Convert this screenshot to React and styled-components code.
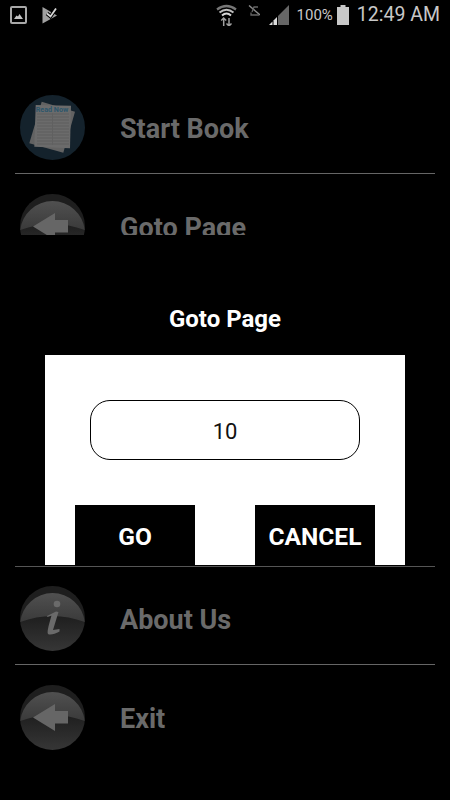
import React from 'react';
import styled, { createGlobalStyle } from 'styled-components';

const GlobalStyle = createGlobalStyle`
  html, body {
    margin: 0;
    padding: 0;
    background: #000;
    font-family: Roboto, "Liberation Sans", sans-serif;
  }
  * {
    box-sizing: border-box;
  }
`;

const Screen = styled.div`
  width: 450px;
  height: 800px;
  background: #000;
  display: flex;
  flex-direction: column;
  overflow: hidden;
`;

const StatusBar = styled.div`
  height: 30px;
  display: flex;
  align-items: center;
  padding: 0 10px;
  color: #c8c8c8;
  flex-shrink: 0;
`;

const StatusLeft = styled.div`
  display: flex;
  align-items: center;
  gap: 15px;
  flex: 1;
`;

const StatusRight = styled.div`
  display: flex;
  align-items: center;
`;

const StatusText = styled.span`
  font-size: ${(p) => p.$size}px;
  line-height: 30px;
  margin-left: ${(p) => p.$left}px;
  white-space: nowrap;
`;

const TopMenu = styled.div`
  height: 205px;
  padding-top: 46px;
  overflow: hidden;
  flex-shrink: 0;
`;

const Row = styled.div`
  height: 98px;
  margin: 0 15px;
  padding: 6px 0 0 5px;
  display: flex;
  align-items: center;
  gap: 35px;
  border-bottom: ${(p) => (p.$last ? 'none' : '1px solid #666')};
`;

const RowLabel = styled.span`
  font-size: 27px;
  font-weight: 700;
  color: #6a6a6a;
  padding-top: 3px;
`;

const DialogArea = styled.div`
  height: 330px;
  flex-shrink: 0;
  display: flex;
  flex-direction: column;
  align-items: center;
`;

const DialogTitle = styled.h2`
  margin: 0;
  height: 120px;
  padding-top: 69px;
  font-size: 24px;
  line-height: 30px;
  font-weight: 700;
  color: #fff;
`;

const DialogBody = styled.div`
  width: 360px;
  height: 210px;
  background: #fff;
  padding: 45px 30px 0;
  display: flex;
  flex-direction: column;
  align-items: center;
`;

const PageInput = styled.input`
  width: 270px;
  height: 60px;
  border: 1px solid #000;
  border-radius: 20px;
  background: #fff;
  color: #111;
  text-align: center;
  font-family: inherit;
  font-size: 22px;
  padding: 2px 0 0;
  outline: none;
`;

const ButtonRow = styled.div`
  width: 100%;
  margin-top: 45px;
  display: flex;
  justify-content: space-between;
`;

const DialogButton = styled.button`
  width: 120px;
  height: 60px;
  border: none;
  background: #000;
  color: #fff;
  font-family: inherit;
  font-size: 24.5px;
  font-weight: 700;
  padding: 2px 0 0;
`;

const BottomMenu = styled.div`
  flex-shrink: 0;
  margin: 1px 15px 0;
  border-top: 1px solid #555;
  & > div {
    margin: 0;
  }
`;

const WifiSlot = styled.span`
  display: flex;
  margin-right: 11px;
`;

const NoSimSlot = styled.span`
  display: flex;
  margin: 0 9px 10px 0;
`;

const BatterySlot = styled.span`
  display: flex;
  margin-left: 4px;
`;

function GlossDisc({ id, children }) {
  return (
    <svg width="65" height="65" viewBox="0 0 65 65">
      <defs>
        <linearGradient id={`${id}-top`} x1="0" y1="0" x2="0" y2="1">
          <stop offset="0" stopColor="#505050" />
          <stop offset="1" stopColor="#3a3a3a" />
        </linearGradient>
        <linearGradient id={`${id}-bottom`} x1="0" y1="0" x2="0" y2="1">
          <stop offset="0.45" stopColor="#1e1e1e" />
          <stop offset="1" stopColor="#363636" />
        </linearGradient>
      </defs>
      <circle cx="32.5" cy="32.5" r="32.5" fill={`url(#${id}-bottom)`} />
      <path d="M0.2 36 A32.5 32.5 0 0 1 64.8 36 Q32.5 24 0.2 36 Z" fill={`url(#${id}-top)`} />
      {children}
    </svg>
  );
}

function BackIcon({ id }) {
  return (
    <GlossDisc id={id}>
      <path d="M13 32.5 L35 19 V26 H48 V38.5 H35 V46 Z" fill="#666" />
    </GlossDisc>
  );
}

function InfoIcon() {
  return (
    <GlossDisc id="info">
      <circle cx="37" cy="18" r="3.3" fill="#6a6a6a" />
      <path
        d="M27 30 L36 25.5 L38.5 26 L33 44 L39.5 43 L39.5 45.5 C35 48 30 49.5 28 48 C26.5 46 30 35 31.5 29.5 L27.5 31 Z"
        fill="#6a6a6a"
      />
    </GlossDisc>
  );
}

function BookIcon() {
  const lines = [19, 22, 25, 28, 31, 34, 37, 40, 43, 46, 49];
  return (
    <svg width="65" height="65" viewBox="0 0 65 65">
      <circle cx="32.5" cy="32.5" r="32.5" fill="#14222c" />
      <path d="M21.7 6.7 L55 16.7 L43.3 57.7 L9.3 48.3 Z" fill="#626262" />
      <path d="M15.7 10 L51 10.7 L50 53.3 L14.3 51.7 Z" fill="#6b6b6b" />
      {lines.map((y) => (
        <path key={y} d={`M17 ${y} H49`} stroke="#5f5f5f" strokeWidth="1" />
      ))}
      <path d="M32.5 18 V50" stroke="#606060" strokeWidth="1" />
      <text x="32" y="17" textAnchor="middle" fontSize="7.2" fontWeight="700" fontFamily="Roboto, sans-serif" fill="#2c566b">
        Read Now
      </text>
    </svg>
  );
}

function GalleryIcon() {
  return (
    <svg width="17" height="18" viewBox="0 0 17 18">
      <rect x="1" y="1" width="15" height="16" rx="1" fill="none" stroke="#a8a8a8" strokeWidth="2" />
      <path d="M4 13 L6.5 9.5 L8 10.5 L9.5 8 L13 13 Z" fill="#c4c4c4" />
    </svg>
  );
}

function StoreCheckIcon() {
  return (
    <svg width="16" height="18" viewBox="0 0 16 18">
      <path d="M0.5 1 L15 9.5 L0.5 17.5 Z" fill="#a0a0a0" />
      <path d="M5 7.5 L8.5 10.5 L14 2.5" fill="none" stroke="#000" strokeWidth="3.8" />
      <path d="M5 7.5 L8.5 10.5 L14 2.5" fill="none" stroke="#d8d8d8" strokeWidth="1.8" />
    </svg>
  );
}

function WifiIcon() {
  return (
    <svg width="21" height="22" viewBox="0 0 21 22">
      <path d="M1 5.5 Q10.5 -1.5 20 5.5" fill="none" stroke="#777" strokeWidth="2.2" />
      <path d="M3.5 8.5 Q10.5 3 17.5 8.5" fill="none" stroke="#bdbdbd" strokeWidth="2" />
      <path d="M6 11.5 Q10.5 7.5 15 11.5" fill="none" stroke="#d8d8d8" strokeWidth="2" />
      <path d="M7.7 14 V22 M5.2 16.5 L7.7 14 L10.2 16.5" fill="none" stroke="#a0a0a0" strokeWidth="1.5" />
      <path d="M13 14 V22 M10.5 19.5 L13 22 L15.5 19.5" fill="none" stroke="#a0a0a0" strokeWidth="1.5" />
    </svg>
  );
}

function NoSimIcon() {
  return (
    <svg width="12" height="11" viewBox="0 0 12 11">
      <path d="M1 0.5 L12 10" stroke="#8a8a8a" strokeWidth="1.4" />
      <path d="M4 7 L6 2 H10 M3 7.5 V10 H11" fill="none" stroke="#666" strokeWidth="1.3" />
    </svg>
  );
}

function SignalIcon() {
  return (
    <svg width="20" height="20" viewBox="0 0 20 20">
      <path d="M0 20 L3.5 16.5 V20 Z" fill="#dcdcdc" />
      <path d="M4.5 20 V15.5 L8 12 V20 Z" fill="#dcdcdc" />
      <path d="M9 20 V11 L20 0 V20 Z" fill="#666" />
    </svg>
  );
}

function BatteryIcon() {
  return (
    <svg width="12" height="20" viewBox="0 0 12 20">
      <path d="M3.5 0 H8.5 V2 H12 V20 H0 V2 H3.5 Z" fill="#c8c8c8" />
    </svg>
  );
}

export default function App() {
  return (
    <>
      <GlobalStyle />
      <Screen>
        <StatusBar>
          <StatusLeft>
            <GalleryIcon />
            <StoreCheckIcon />
          </StatusLeft>
          <StatusRight>
            <WifiSlot><WifiIcon /></WifiSlot>
            <NoSimSlot><NoSimIcon /></NoSimSlot>
            <SignalIcon />
            <StatusText $size={15} $left={8}>100%</StatusText>
            <BatterySlot><BatteryIcon /></BatterySlot>
            <StatusText $size={19.5} $left={8}>12:49 AM</StatusText>
          </StatusRight>
        </StatusBar>

        <TopMenu>
          <Row>
            <BookIcon />
            <RowLabel>Start Book</RowLabel>
          </Row>
          <Row $last>
            <BackIcon id="goto" />
            <RowLabel>Goto Page</RowLabel>
          </Row>
        </TopMenu>

        <DialogArea>
          <DialogTitle>Goto Page</DialogTitle>
          <DialogBody>
            <PageInput defaultValue="10" />
            <ButtonRow>
              <DialogButton>GO</DialogButton>
              <DialogButton>CANCEL</DialogButton>
            </ButtonRow>
          </DialogBody>
        </DialogArea>

        <BottomMenu>
          <Row>
            <InfoIcon />
            <RowLabel>About Us</RowLabel>
          </Row>
          <Row $last>
            <BackIcon id="exit" />
            <RowLabel>Exit</RowLabel>
          </Row>
        </BottomMenu>
      </Screen>
    </>
  );
}
